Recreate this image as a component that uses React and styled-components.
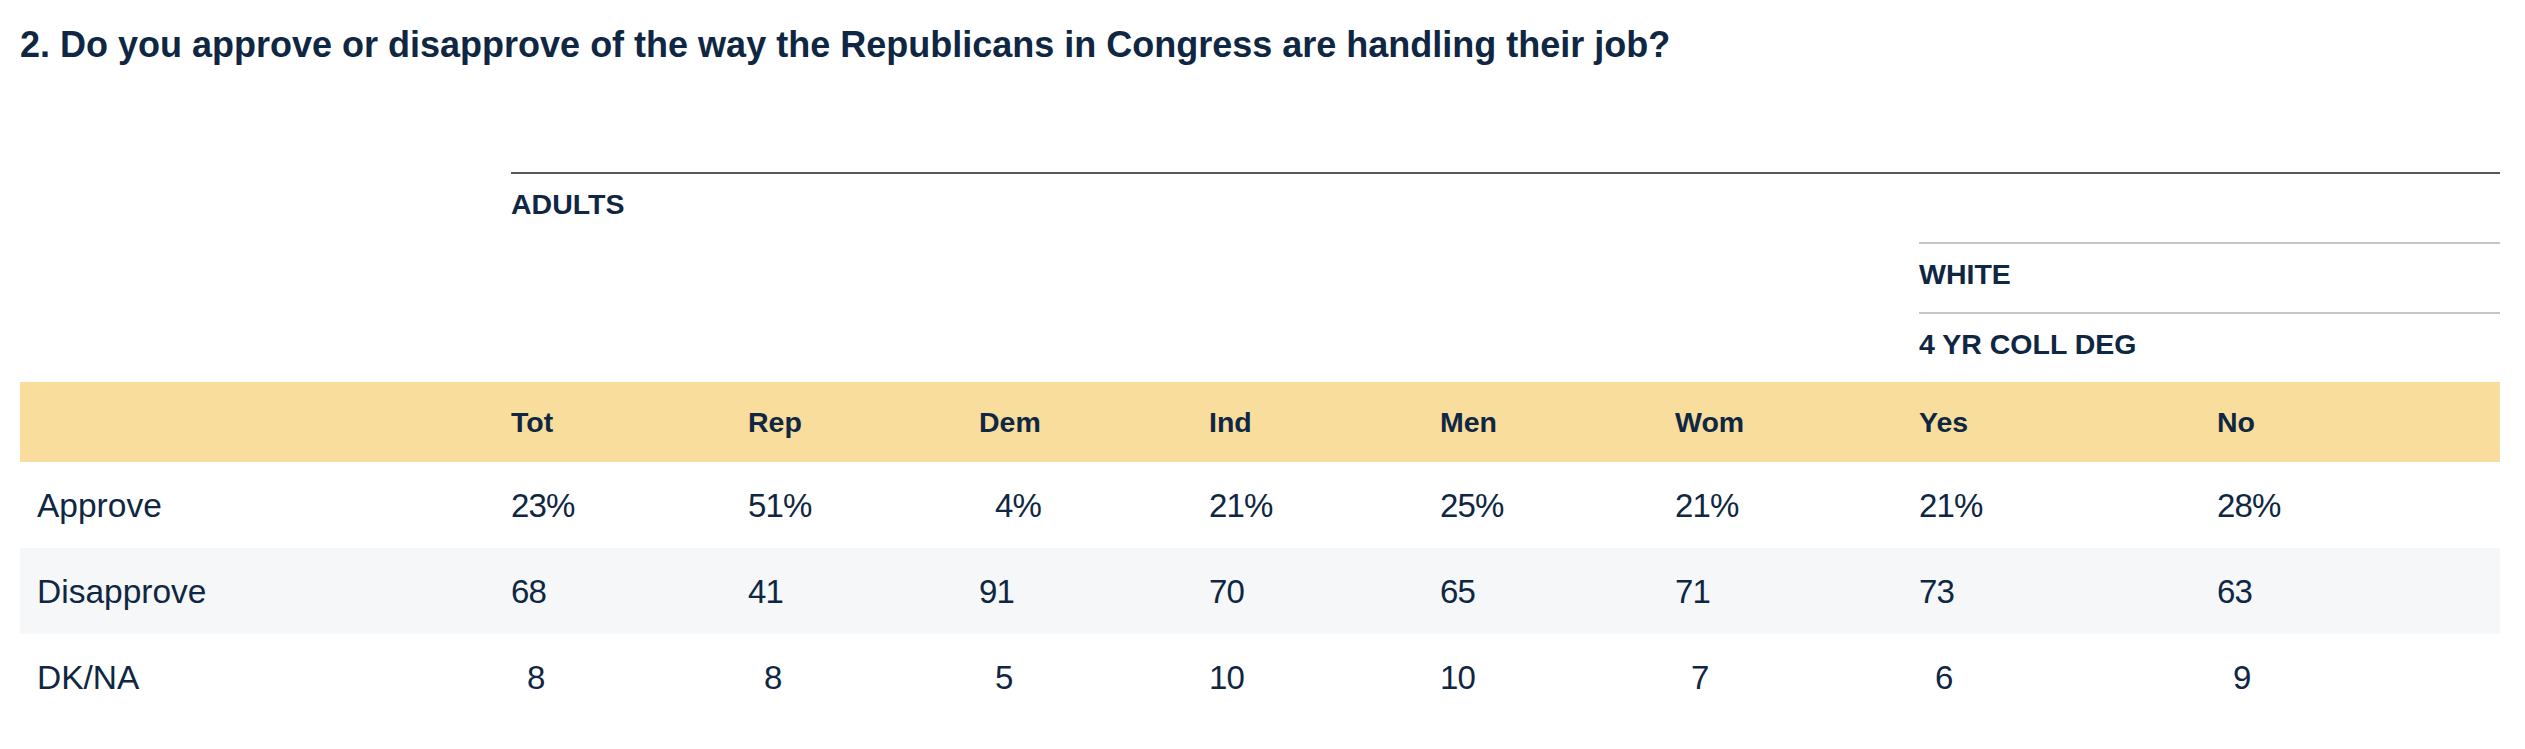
import React from "react"
import styled, { createGlobalStyle } from "styled-components"

const GlobalStyle = createGlobalStyle`
  html, body {
    margin: 0;
    padding: 0;
    background: #ffffff;
  }

  body {
    font-family: "Liberation Sans", Arial, sans-serif;
    color: #0f2742;
  }
`

const COLUMNS = "491px 237px 231px 230px 231px 235px 244px 298px 283px"

const Page = styled.div`
  padding: 27px 25px 20px 20px;
  width: 2480px;
`

const Title = styled.h2`
  margin: 0;
  font-size: 36px;
  line-height: 36px;
  font-weight: 700;
`

const Table = styled.div`
  margin-top: 109px;
  display: flex;
  flex-direction: column;
`

const Row = styled.div`
  display: grid;
  grid-template-columns: ${COLUMNS};
  align-items: center;
  height: ${props => props.height || 86}px;
  background: ${props => props.background || "transparent"};
`

const Spanner = styled.div`
  display: grid;
  grid-template-columns: ${COLUMNS};
`

const SpanLabel = styled.div`
  grid-column: ${props => props.start} / -1;
  border-top: 2px solid ${props => (props.dark ? "#55595d" : "#c3c6c9")};
  padding: 16px 0 24px;
  font-size: 28.5px;
  line-height: 28px;
  font-weight: 700;
`

const HeadCell = styled.div`
  font-size: 28.5px;
  line-height: 28px;
  font-weight: 700;
`

const Label = styled.div`
  padding-left: 17px;
  font-size: 33.5px;
  line-height: 33px;
`

const Value = styled.div`
  padding-left: ${props => (props.single ? 16 : 0)}px;
  font-size: 33px;
  line-height: 33px;
  letter-spacing: -0.8px;
`

const groups = ["Tot", "Rep", "Dem", "Ind", "Men", "Wom", "Yes", "No"]

const rows = [
  { label: "Approve", values: ["23%", "51%", "4%", "21%", "25%", "21%", "21%", "28%"] },
  { label: "Disapprove", values: ["68", "41", "91", "70", "65", "71", "73", "63"] },
  { label: "DK/NA", values: ["8", "8", "5", "10", "10", "7", "6", "9"] },
]

function isSingle(value) {
  return value.replace("%", "").length === 1
}

export default function App() {
  return (
    <Page>
      <GlobalStyle />
      <Title>
        2. Do you approve or disapprove of the way the Republicans in Congress
        are handling their job?
      </Title>
      <Table>
        <Spanner>
          <SpanLabel start={2} dark>
            ADULTS
          </SpanLabel>
        </Spanner>
        <Spanner>
          <SpanLabel start={8}>WHITE</SpanLabel>
        </Spanner>
        <Spanner>
          <SpanLabel start={8}>4 YR COLL DEG</SpanLabel>
        </Spanner>
        <Row height={80} background="#f8dd9d">
          <span />
          {groups.map(group => (
            <HeadCell key={group}>{group}</HeadCell>
          ))}
        </Row>
        {rows.map((row, i) => (
          <Row key={row.label} background={i % 2 === 1 ? "#f5f7f9" : null}>
            <Label>{row.label}</Label>
            {row.values.map((value, j) => (
              <Value key={j} single={isSingle(value)}>
                {value}
              </Value>
            ))}
          </Row>
        ))}
      </Table>
    </Page>
  )
}
